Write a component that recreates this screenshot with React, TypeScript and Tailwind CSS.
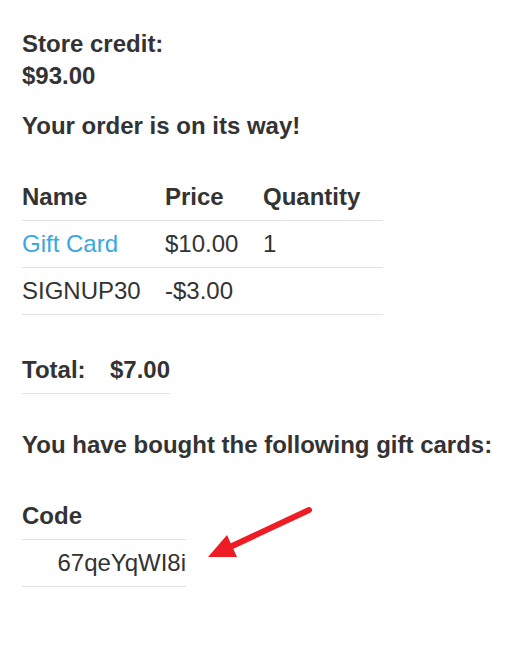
const font = { fontFamily: '"Liberation Sans", Arial, sans-serif' };

const items = [
  { name: "Gift Card", price: "$10.00", qty: "1", link: true },
  { name: "SIGNUP30", price: "-$3.00", qty: "", link: false },
];

const App = () => {
  return (
    <div className="relative min-h-[647px] bg-white text-[#333] text-[24px]" style={font}>
      <div className="pl-[22px] pt-[28px]">
        <div className="font-bold leading-[32px]">
          <div>Store credit:</div>
          <div>$93.00</div>
        </div>

        <h3 className="mt-[18px] font-bold leading-[32px]">Your order is on its way!</h3>

        <table className="mt-[32px] w-[361px] border-collapse text-left leading-[26px]">
          <thead>
            <tr className="border-b border-[#e2e2e2]">
              <th className="w-[143px] py-[10px] font-bold">Name</th>
              <th className="w-[98px] py-[10px] font-bold">Price</th>
              <th className="py-[10px] font-bold">Quantity</th>
            </tr>
          </thead>
          <tbody>
            {items.map((item) => (
              <tr key={item.name} className="border-b border-[#e2e2e2]">
                <td className="py-[10px]">
                  {item.link ? <a className="text-[#39a8e0]">{item.name}</a> : item.name}
                </td>
                <td className="py-[10px]">{item.price}</td>
                <td className="py-[10px]">{item.qty}</td>
              </tr>
            ))}
          </tbody>
        </table>

        <table className="mt-[32px] w-[148px] border-collapse text-left leading-[26px]">
          <tbody>
            <tr className="border-b border-[#e2e2e2]">
              <td className="w-[88px] py-[10px] font-bold">Total:</td>
              <td className="py-[10px] font-bold">$7.00</td>
            </tr>
          </tbody>
        </table>

        <h3 className="mt-[35px] font-bold leading-[32px]">You have bought the following gift cards:</h3>

        <table className="mt-[32px] w-[164px] border-collapse leading-[26px]">
          <thead>
            <tr className="border-b border-[#e2e2e2]">
              <th className="py-[10px] text-left font-bold">Code</th>
            </tr>
          </thead>
          <tbody>
            <tr className="border-b border-[#e2e2e2]">
              <td className="py-[10px] text-right">67qeYqWI8i</td>
            </tr>
          </tbody>
        </table>
      </div>

      <svg className="absolute left-[200px] top-[500px]" width="120" height="65" viewBox="0 0 120 65">
        <line x1="109" y1="10" x2="30" y2="47" stroke="#ee1d25" strokeWidth="6" strokeLinecap="round" />
        <polygon points="8,57 27,35 37,57" fill="#ee1d25" />
      </svg>
    </div>
  );
};

export default App;
